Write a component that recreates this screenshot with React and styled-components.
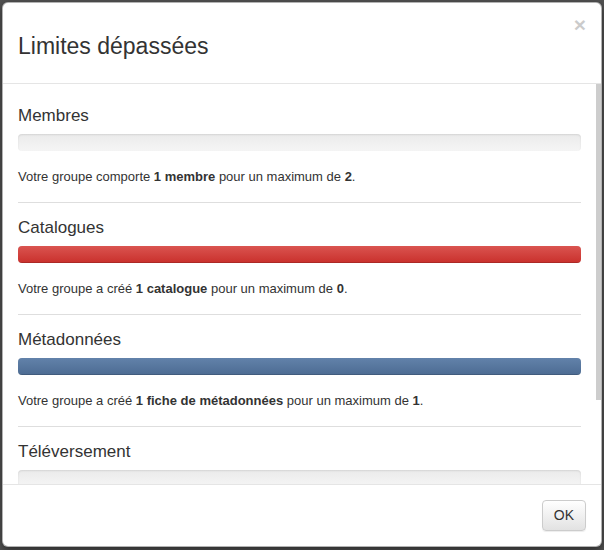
import React from "react";
import styled, { createGlobalStyle } from "styled-components";

const GlobalStyle = createGlobalStyle`
  html, body { margin: 0; padding: 0; }
  body {
    background: #525252;
    font-family: "Liberation Sans", Arial, Helvetica, sans-serif;
    color: #333;
  }
  * { box-sizing: border-box; }
`;

const Backdrop = styled.div`
  width: 604px;
  height: 550px;
  padding: 2px;
  background: #525252;
`;

const Modal = styled.div`
  width: 600px;
  height: 545px;
  background: #fff;
  border: 1px solid rgba(0, 0, 0, 0.3);
  border-radius: 6px;
  box-shadow: 0 3px 9px rgba(0, 0, 0, 0.5);
  display: flex;
  flex-direction: column;
  overflow: hidden;
`;

const Header = styled.div`
  position: relative;
  flex: 0 0 auto;
  padding: 18px 15px 12px;
  border-bottom: 1px solid #e5e5e5;
`;

const Title = styled.h4`
  margin: 0;
  font-size: 23px;
  line-height: 50px;
  font-weight: normal;
  color: #333;
`;

const Close = styled.button`
  position: absolute;
  top: 11px;
  right: 15px;
  padding: 0;
  border: 0;
  background: transparent;
  font-family: "Liberation Sans", Arial, sans-serif;
  font-size: 21px;
  font-weight: bold;
  line-height: 21px;
  color: #000;
  opacity: 0.2;
  cursor: pointer;
`;

const BodyWrap = styled.div`
  flex: 1 1 auto;
  min-height: 0;
  display: flex;
`;

const Body = styled.div`
  flex: 1 1 auto;
  min-width: 0;
  overflow: hidden;
  padding: 21px 15px 20px;
`;

const ScrollRail = styled.div`
  flex: 0 0 5px;
  background: #fff;
`;

const ScrollThumb = styled.div`
  height: 316px;
  background: #cdcdcd;
`;

const Section = styled.section`
  & + & {
    margin-top: 14px;
  }
`;

const SectionTitle = styled.h4`
  margin: 0;
  font-size: 17px;
  line-height: 22px;
  font-weight: normal;
  color: #333;
`;

const Track = styled.div`
  margin-top: 7px;
  height: 17px;
  border-radius: 4px;
  overflow: hidden;
  background: linear-gradient(to bottom, #ebebeb 0%, #f5f5f5 100%);
  box-shadow: inset 0 1px 2px rgba(0, 0, 0, 0.1);
`;

const fills = {
  danger: "linear-gradient(to bottom, #da5450 0%, #c9302c 100%)",
  primary: "linear-gradient(to bottom, #6282aa 0%, #4c6b92 100%)",
};

const Fill = styled.div`
  height: 100%;
  background: ${(p) => fills[p.$variant]};
  box-shadow: inset 0 -1px 0 rgba(0, 0, 0, 0.15);
`;

const Text = styled.p`
  margin: 16px 0 0;
  font-size: 13px;
  line-height: 20px;
  color: #333;

  strong { font-weight: bold; }
`;

const Rule = styled.hr`
  margin: 15px 0 0;
  border: 0;
  border-top: 1px solid #dedede;
  height: 0;
`;

const Footer = styled.div`
  flex: 0 0 auto;
  display: flex;
  justify-content: flex-end;
  padding: 15px;
  border-top: 1px solid #e5e5e5;
`;

const Button = styled.button`
  font-family: "Liberation Sans", Arial, sans-serif;
  font-size: 14px;
  line-height: 19px;
  padding: 5px 11px;
  color: #333;
  background: linear-gradient(to bottom, #fff 0%, #e2e2e2 100%);
  border: 1px solid #ccc;
  border-radius: 4px;
  box-shadow: inset 0 1px 0 rgba(255, 255, 255, 0.15), 0 1px 1px rgba(0, 0, 0, 0.075);
  cursor: pointer;
`;

const sections = [
  {
    title: "Membres",
    pct: 50,
    variant: null,
    text: (
      <>
        Votre groupe comporte <strong>1 membre</strong> pour un maximum de <strong>2</strong>.
      </>
    ),
  },
  {
    title: "Catalogues",
    pct: 100,
    variant: "danger",
    text: (
      <>
        Votre groupe a créé <strong>1 catalogue</strong> pour un maximum de <strong>0</strong>.
      </>
    ),
  },
  {
    title: "Métadonnées",
    pct: 100,
    variant: "primary",
    text: (
      <>
        Votre groupe a créé <strong>1 fiche de métadonnées</strong> pour un maximum de <strong>1</strong>.
      </>
    ),
  },
  {
    title: "Téléversement",
    pct: 0,
    variant: null,
    text: null,
  },
];

export default function App() {
  return (
    <>
      <GlobalStyle />
      <Backdrop>
        <Modal>
          <Header>
            <Title>Limites dépassées</Title>
            <Close aria-label="Fermer">×</Close>
          </Header>
          <BodyWrap>
            <Body>
              {sections.map((s, i) => (
                <Section key={s.title}>
                  <SectionTitle>{s.title}</SectionTitle>
                  <Track>
                    {s.variant && <Fill $variant={s.variant} style={{ width: `${s.pct}%` }} />}
                  </Track>
                  {s.text && <Text>{s.text}</Text>}
                  {i < sections.length - 1 && <Rule />}
                </Section>
              ))}
            </Body>
            <ScrollRail>
              <ScrollThumb />
            </ScrollRail>
          </BodyWrap>
          <Footer>
            <Button>OK</Button>
          </Footer>
        </Modal>
      </Backdrop>
    </>
  );
}
